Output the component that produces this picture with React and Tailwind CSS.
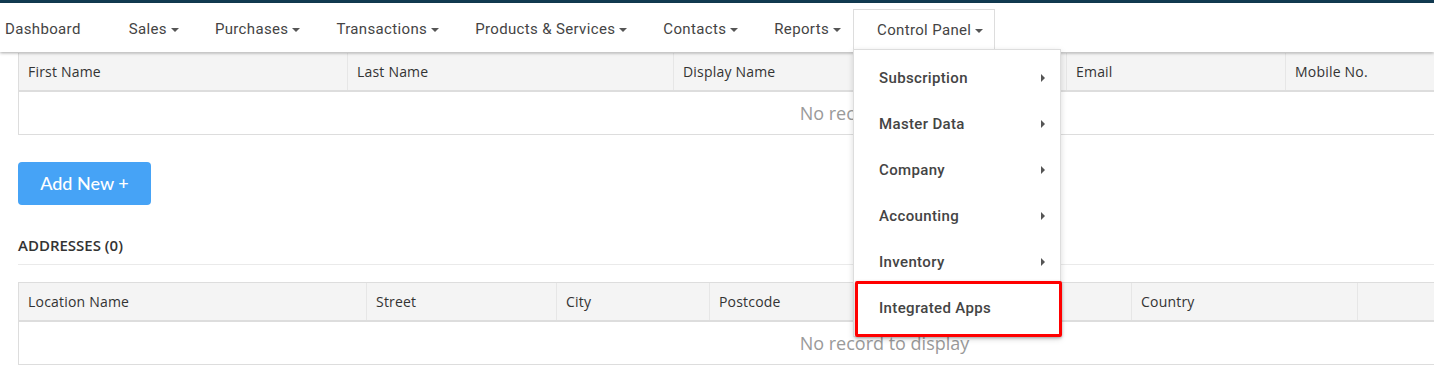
import React from 'react';

const navItems = [
  { label: 'Sales' },
  { label: 'Purchases' },
  { label: 'Transactions' },
  { label: 'Products & Services' },
  { label: 'Contacts' },
  { label: 'Reports' },
];

const menuItems = ['Subscription', 'Master Data', 'Company', 'Accounting', 'Inventory'];

const contactCols = [
  { label: 'First Name', w: 329 },
  { label: 'Last Name', w: 326 },
  { label: 'Display Name', w: 393 },
  { label: 'Email', w: 219 },
  { label: 'Mobile No.', w: 465 },
];

const addressCols = [
  { label: 'Location Name', w: 348 },
  { label: 'Street', w: 190 },
  { label: 'City', w: 153 },
  { label: 'Postcode', w: 211 },
  { label: 'State', w: 211 },
  { label: 'Country', w: 226 },
  { label: '', w: 393 },
];

const CaretDown = () => (
  <svg width="8" height="4" viewBox="0 0 8 4" className="ml-[4px] mt-[1px]">
    <path d="M0 0h8L4 4z" fill="#555" />
  </svg>
);

const CaretRight = () => (
  <svg width="4" height="8" viewBox="0 0 4 8">
    <path d="M0 0l4 4-4 4z" fill="#555" />
  </svg>
);

const EmptyTable = ({ cols, top }) => (
  <div className={`w-[1732px] border-l border-[#ddd] ${top ? 'border-t' : ''}`}>
    <div className="flex h-[39px] bg-[#f4f4f4] border-b-2 border-[#ddd]">
      {cols.map((c, i) => (
        <div
          key={i}
          style={{ width: c.w }}
          className="flex items-center px-[9px] border-r border-[#e6e6e6] text-[14px] tracking-[0.2px] text-[#333] shrink-0"
        >
          {c.label}
        </div>
      ))}
    </div>
    <div className="h-[43px] border-b border-[#ddd] flex items-center justify-center text-[18px] text-[#9a9a9a]">
      No record to display
    </div>
  </div>
);

const App = () => {
  return (
    <div className="relative w-[1434px] h-[368px] overflow-hidden bg-white font-['Open_Sans',sans-serif]">
      <div className="h-[3px] bg-[#123b52]" />
      <nav className="relative z-10 h-[49px] bg-white shadow-[0_1px_3px_rgba(0,0,0,0.35)] flex items-stretch font-['Roboto',sans-serif] text-[15px] tracking-[0.35px] text-[#444]">
        <div className="flex items-center pt-[3px] pl-[5px] pr-[24px]">Dashboard</div>
        {navItems.map((item) => (
          <div key={item.label} className="flex items-center pt-[3px] pl-[24px] pr-[12px]">
            {item.label}
            <CaretDown />
          </div>
        ))}
        <div className="relative self-start mt-[6px] h-[41px] flex items-center pt-[1px] pl-[23px] pr-[11px] bg-white border-x border-t border-[#ddd]">
          Control Panel
          <CaretDown />
          <div className="absolute left-[-1px] top-[39px] w-[208px] bg-white border border-[#ddd] shadow-[0_2px_6px_rgba(0,0,0,0.15)] py-[5px]">
            {menuItems.map((m) => (
              <div key={m} className="h-[46px] flex items-center justify-between pl-[25px] pr-[15px] font-medium text-[#444]">
                <span>{m}</span>
                <CaretRight />
              </div>
            ))}
            <div className="h-[46px] flex items-center pl-[25px] font-medium text-[#444]">Integrated Apps</div>
            <div className="absolute left-[1px] top-[231px] w-[207px] h-[56px] border-[3px] border-[#ff0000] rounded-[2px] shadow-[0_1px_3px_rgba(0,0,0,0.3)]" />
          </div>
        </div>
      </nav>

      <div className="pl-[18px] pt-[1px]">
        <EmptyTable cols={contactCols} />

        <button className="mt-[27px] h-[43px] w-[133px] rounded-[4px] bg-[#46a3f6] text-white text-[18px] font-['Lato',sans-serif] font-medium">
          Add New +
        </button>

        <div className="mt-[30px] pb-[9px] w-[1732px] border-b border-[#eaeaea] text-[15px] font-semibold text-[#333] leading-[20px]">
          ADDRESSES (0)
        </div>

        <div className="mt-[17px]">
          <EmptyTable cols={addressCols} top />
        </div>
      </div>
    </div>
  );
};

export default App;
